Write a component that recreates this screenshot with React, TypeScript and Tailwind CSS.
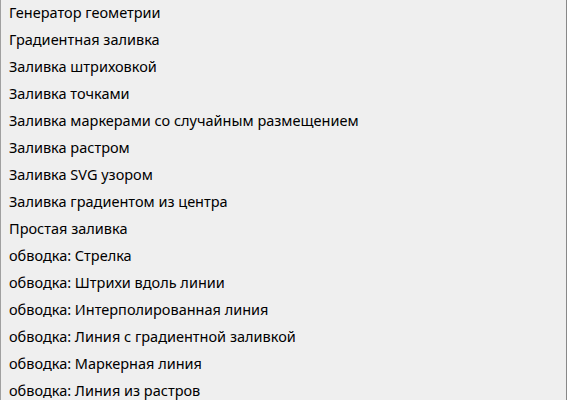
const items = [
  'Генератор геометрии',
  'Градиентная заливка',
  'Заливка штриховкой',
  'Заливка точками',
  'Заливка маркерами со случайным размещением',
  'Заливка растром',
  'Заливка SVG узором',
  'Заливка градиентом из центра',
  'Простая заливка',
  'обводка: Стрелка',
  'обводка: Штрихи вдоль линии',
  'обводка: Интерполированная линия',
  'обводка: Линия с градиентной заливкой',
  'обводка: Маркерная линия',
  'обводка: Линия из растров',
];

export default function App() {
  return (
    <div className="h-[400px] w-[567px] overflow-hidden bg-[#efefef] border-l border-l-[#a0a0a0] border-r border-r-[#888888]">
      <ul className="font-['Noto_Sans',sans-serif] text-[14.5px] text-black">
        {items.map((item) => (
          <li key={item} className="h-[27px] pl-2 leading-[25px] whitespace-nowrap">
            {item}
          </li>
        ))}
      </ul>
    </div>
  );
}
